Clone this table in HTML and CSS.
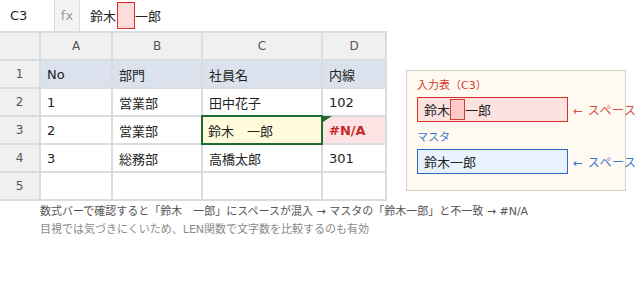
FILE: index.html
```html
<!DOCTYPE html>
<html lang="ja">
<head>
    <meta charset="UTF-8">
    <title>スペース混入の確認</title>
    <link rel="stylesheet" href="styles.css">
</head>
<body>
    <div class="page">
        <div class="sheet">
            <div class="formula-bar">
                <div class="name-box">C3</div>
                <div class="fx">fx</div>
                <div class="formula">鈴木<span class="space-mark"></span>一郎</div>
            </div>

            <div class="grid">
                <div class="corner"></div>
                <div class="col-head">A</div>
                <div class="col-head">B</div>
                <div class="col-head">C</div>
                <div class="col-head">D</div>

                <div class="row-head">1</div>
                <div class="cell title">No</div>
                <div class="cell title">部門</div>
                <div class="cell title">社員名</div>
                <div class="cell title">内線</div>

                <div class="row-head">2</div>
                <div class="cell">1</div>
                <div class="cell">営業部</div>
                <div class="cell">田中花子</div>
                <div class="cell">102</div>

                <div class="row-head">3</div>
                <div class="cell">2</div>
                <div class="cell">営業部</div>
                <div class="cell selected">鈴木　一郎</div>
                <div class="cell error">#N/A</div>

                <div class="row-head">4</div>
                <div class="cell">3</div>
                <div class="cell">総務部</div>
                <div class="cell">高橋太郎</div>
                <div class="cell">301</div>

                <div class="row-head">5</div>
                <div class="cell"></div>
                <div class="cell"></div>
                <div class="cell"></div>
                <div class="cell"></div>
            </div>

            <div class="notes">
                <p>数式バーで確認すると「鈴木　一郎」にスペースが混入 → マスタの「鈴木一郎」と不一致 → #N/A</p>
                <p class="hint">目視では気づきにくいため、LEN関数で文字数を比較するのも有効</p>
            </div>
        </div>

        <div class="compare">
            <div class="label input-label">入力表（C3）</div>
            <div class="compare-row">
                <div class="value input-value">鈴木<span class="space-mark small"></span>一郎</div>
                <span class="arrow input-arrow">← スペースあり</span>
            </div>
            <div class="label master-label">マスタ</div>
            <div class="compare-row">
                <div class="value master-value">鈴木一郎</div>
                <span class="arrow master-arrow">← スペースなし</span>
            </div>
        </div>
    </div>
</body>
</html>
```

FILE: styles.css
```css
body {
    margin: 0;
    font-family: "DejaVu Sans", "Noto Sans CJK JP", sans-serif;
    color: #222;
    background: #fff;
    overflow: hidden;
}
.page {
    display: flex;
    align-items: flex-start;
}
.sheet {
    width: 387px;
    flex-shrink: 0;
}

/* formula bar */
.formula-bar {
    display: flex;
    height: 31px;
    font-size: 13px;
}
.name-box {
    width: 55px;
    padding-left: 10px;
    box-sizing: border-box;
    border-right: 1px solid #dadce0;
    display: flex;
    align-items: center;
}
.fx {
    width: 24px;
    background: #f3f3f3;
    border-right: 1px solid #dadce0;
    color: #9a9a9a;
    display: flex;
    align-items: center;
    justify-content: center;
}
.formula {
    padding-left: 10px;
    display: flex;
    align-items: center;
}
.space-mark {
    display: inline-block;
    width: 16px;
    height: 25px;
    margin-left: 1px;
    background: #ffdcdc;
    border: 1px solid #d93025;
}
.space-mark.small {
    width: 13px;
    height: 19px;
    margin-left: 0;
    background: #ffc9c9;
    border-color: #d0402f;
}

/* sheet grid */
.grid {
    display: grid;
    grid-template-columns: 39px 70px 88px 118px 62px;
    grid-auto-rows: 26px;
    gap: 2px;
    padding: 2px 2px 2px 0;
    background: #d9dce1;
    font-size: 13px;
}
.corner, .col-head, .row-head {
    background: #f0f0f0;
    color: #555;
    font-size: 12px;
    display: flex;
    align-items: center;
    justify-content: center;
}
.cell {
    background: #fff;
    padding-left: 6px;
    display: flex;
    align-items: center;
    white-space: nowrap;
}
.cell.title {
    background: #dbe2ee;
}
.cell.selected {
    position: relative;
    background: #fffbdb;
    padding-left: 5px;
}
.cell.selected::after {
    content: "";
    position: absolute;
    inset: -2px;
    border: 2px solid #1e6b35;
    z-index: 1;
}
.cell.error {
    position: relative;
    background: #fde3e3;
    color: #c62828;
    font-weight: bold;
}
.cell.error::before {
    content: "";
    position: absolute;
    top: -1px;
    left: 0;
    border-top: 6px solid #1e6b35;
    border-right: 9px solid transparent;
    z-index: 2;
}

/* notes under the sheet */
.notes {
    padding-left: 40px;
    margin-top: 2px;
    font-size: 11px;
    line-height: 18px;
    color: #555;
    white-space: nowrap;
}
.notes p {
    margin: 0;
}
.notes .hint {
    color: #8a8a8a;
}

/* comparison panel */
.compare {
    margin: 70px 0 0 19px;
    width: 220px;
    flex-shrink: 0;
    box-sizing: border-box;
    padding: 8px 10px 16px;
    background: #fffaf1;
    border: 1px solid #d8cfc1;
}
.label {
    font-size: 11px;
    line-height: 14px;
    margin-bottom: 4px;
}
.input-label {
    color: #d33b2c;
}
.master-label {
    color: #3a78c9;
    margin-top: 9px;
}
.compare-row {
    display: flex;
    align-items: center;
    gap: 5px;
}
.value {
    width: 151px;
    height: 25px;
    flex-shrink: 0;
    box-sizing: border-box;
    padding-left: 6px;
    font-size: 13px;
    display: flex;
    align-items: center;
}
.input-value {
    background: #fde2e2;
    border: 1px solid #d93025;
}
.master-value {
    background: #e8f2fd;
    border: 1px solid #2a6bc4;
}
.arrow {
    font-size: 12px;
    letter-spacing: 0.5px;
    white-space: nowrap;
}
.input-arrow {
    color: #d9503f;
}
.master-arrow {
    color: #3a78c9;
}
```
